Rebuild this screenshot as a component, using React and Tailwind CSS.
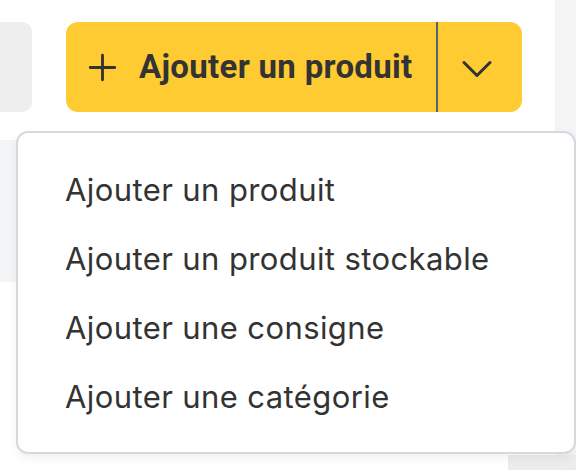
import React, { useState } from "react";

const menuItems = [
  "Ajouter un produit",
  "Ajouter un produit stockable",
  "Ajouter une consigne",
  "Ajouter une catégorie",
];

function PlusIcon() {
  return (
    <svg width="31" height="31" viewBox="0 0 24 24" fill="none" stroke="#333333" strokeWidth="2.2" strokeLinecap="round">
      <path d="M12 2.5v19M2.5 12h19" />
    </svg>
  );
}

function ChevronIcon() {
  return (
    <svg width="30" height="18" viewBox="0 0 30 17" fill="none" stroke="#333333" strokeWidth="3" strokeLinecap="round" strokeLinejoin="round">
      <path d="M2 2l13 13L28 2" />
    </svg>
  );
}

export default function App() {
  const [open, setOpen] = useState(true);

  return (
    <div className="relative w-[576px] h-[470px] overflow-hidden bg-white font-['Inter',sans-serif] text-[#333333]">
      <div className="flex h-full">
        <div className="flex-1 flex flex-col">
          {/* top toolbar */}
          <div className="flex items-start pt-[22px]">
            <div className="w-[32px] h-[90px] rounded-r-[10px] bg-[#eeeeee]" />
            <div className="ml-[34px] flex h-[90px] w-[456px] rounded-[12px] bg-[#ffcb33]">
              <button className="flex flex-1 items-center pl-[21px] font-['Roboto',sans-serif] text-[33px] font-bold tracking-[0.3px]">
                <PlusIcon />
                <span className="ml-[21px]">Ajouter un produit</span>
              </button>
              <div className="w-[2px] bg-[#5b6070]" />
              <button
                className="flex w-[84px] items-center justify-center pr-[7px] pt-[4px]"
                onClick={() => setOpen(!open)}
              >
                <ChevronIcon />
              </button>
            </div>
          </div>
          <div className="mt-[28px] h-[142px] w-[40px] bg-[#f4f5f7]" />
        </div>
        <div className="w-[21px] flex flex-col">
          <div className="flex-1 bg-[#f5f5f5]" />
        </div>
      </div>
      <div className="absolute left-[508px] top-[455px] h-[15px] w-[68px] bg-[#ececec]" />

      {open && (
        <div className="absolute left-[16px] top-[131px] w-[560px] h-[323px] rounded-[12px] border-2 border-[#d6d8e0] bg-white pt-[23px] shadow-[0_4px_10px_rgba(0,0,0,0.06)]">
          {menuItems.map((item) => (
            <div key={item} className="flex h-[69px] items-center pl-[47px] text-[31px] tracking-[0.4px]">
              {item}
            </div>
          ))}
        </div>
      )}
    </div>
  );
}
